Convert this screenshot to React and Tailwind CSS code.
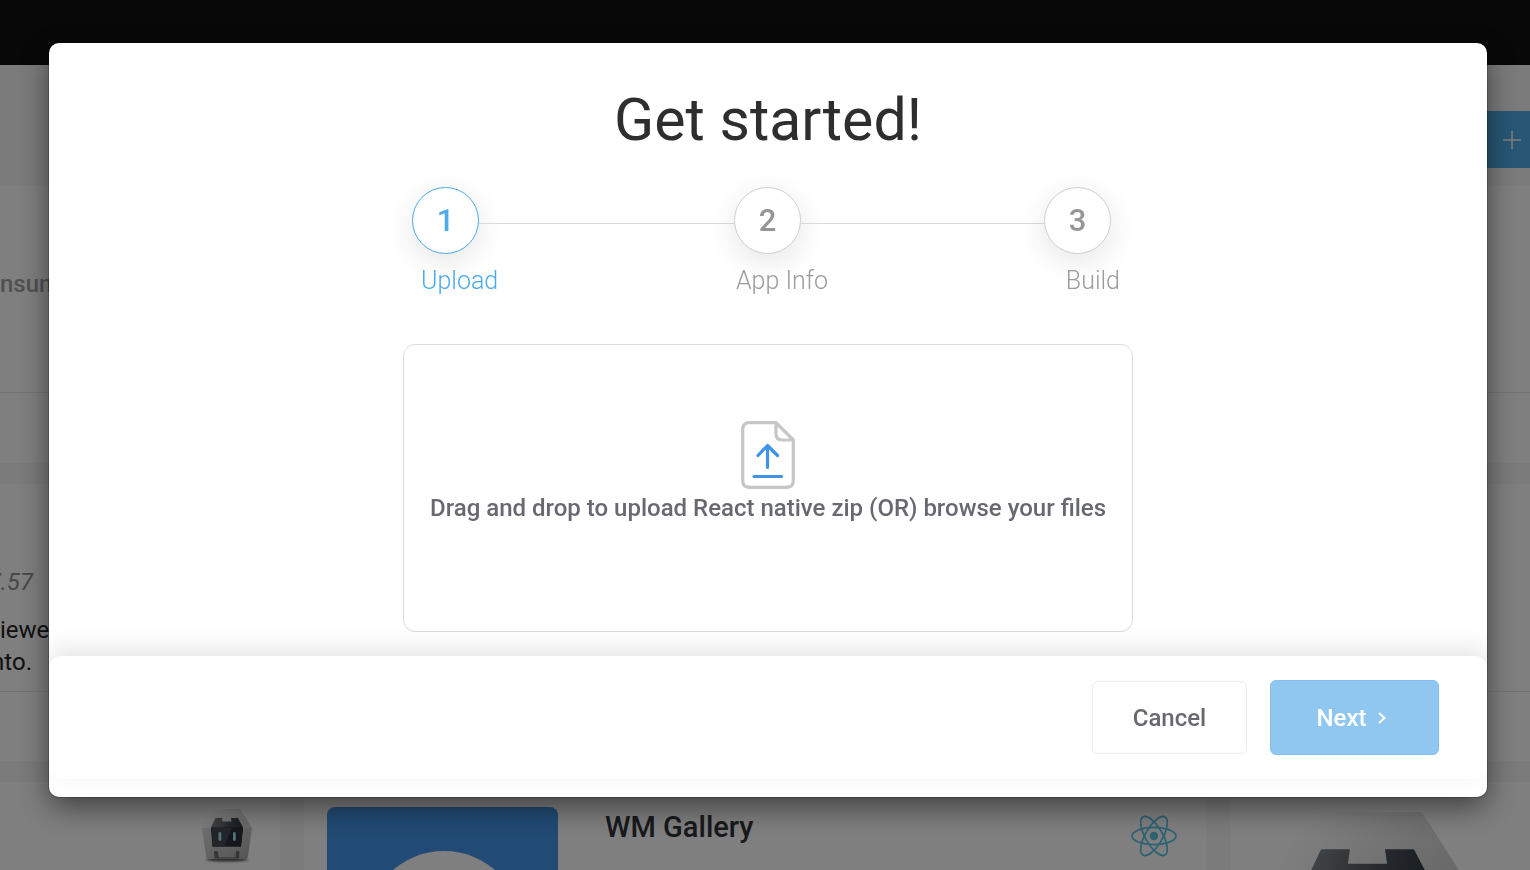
import React from "react";

const steps = ["Upload", "App Info", "Build"];

function CordovaIcon({ className, id }) {
  return (
    <svg viewBox="0 0 52 56" className={className} aria-hidden="true">
      <defs>
        <linearGradient id={id + "-top"} x1="0" y1="0" x2="1" y2="0.3">
          <stop offset="0.200" stopColor="#ffffff" />
          <stop offset="1" stopColor="#d4d4d4" />
        </linearGradient>
        <linearGradient id={id + "-body"} x1="0" y1="0" x2="1" y2="1">
          <stop offset="0" stopColor="#e0e0e0" />
          <stop offset="1" stopColor="#a8a8a8" />
        </linearGradient>
        <linearGradient id={id + "-face"} x1="0" y1="0" x2="1" y2="0.3">
          <stop offset="0" stopColor="#8a9197" />
          <stop offset="0.6" stopColor="#4b535a" />
          <stop offset="1" stopColor="#2b3542" />
        </linearGradient>
        <filter id={id + "-blur"} x="-20%" y="-100%" width="140%" height="300%">
          <feGaussianBlur stdDeviation="1.2" />
        </filter>
      </defs>
      <ellipse cx="26" cy="51.5" rx="21" ry="2" fill="#555" filter={`url(#${id}-blur)`} />
      <path d="M12 1H39L51 20H1Z" fill={`url(#${id}-top)`} />
      <path d="M1 20H51L47 48Q46.500 51 44 51H8Q5.500 51 5 48Z" fill={`url(#${id}-body)`} />
      <path d="M14.500 10H21.500L21 13.500H30.500L30 10H37L42 19.500L40 38.500H11.500L10 19.500Z" fill={`url(#${id}-face)`} />
      <path d="M10 19.500H42L40 38.500H11.500Z" fill="#29313c" />
      <path d="M10.500 20H31L23 38.500H12Z" fill="#454d55" />
      <rect x="17.500" y="24" width="2.800" height="9" rx="1.400" fill="#a6e4ef" />
      <rect x="32" y="24" width="2.800" height="9" rx="1.400" fill="#a6e4ef" />
      <path d="M13 43H16.500L18 49.500H34.500L35 43H38.500L38 50.500H13.500Z" fill="#6a6a6a" />
    </svg>
  );
}

function ReactIcon({ className }) {
  return (
    <svg viewBox="0 0 46 44" className={className} fill="none" stroke="#58c4e6" strokeWidth="1.700" aria-hidden="true">
      <circle cx="23" cy="22" r="4.200" fill="#58c4e6" stroke="none" />
      <ellipse cx="23" cy="22" rx="22" ry="8.600" />
      <ellipse cx="23" cy="22" rx="22" ry="8.600" transform="rotate(60 23 22)" />
      <ellipse cx="23" cy="22" rx="22" ry="8.600" transform="rotate(120 23 22)" />
    </svg>
  );
}

function FileUploadIcon() {
  return (
    <svg viewBox="0 0 54 68" className="h-[68px] w-[54px]" fill="none" strokeLinecap="round" strokeLinejoin="round" aria-hidden="true">
      <path d="M35 1.700H8.500Q1.700 1.700 1.700 8.500V59.500Q1.700 66.300 8.500 66.300H45.500Q52.300 66.300 52.300 59.500V19L35 1.700V13Q35 19 41 19H52" stroke="#c6c6c6" strokeWidth="3.200" />
      <path d="M26.500 46.500V25M17 34.500L26.500 24.500L36.500 34.500M13 55.500H40.500" stroke="#3f94e9" strokeWidth="3.200" />
    </svg>
  );
}

function Dashboard() {
  return (
    <div className="flex h-screen flex-col overflow-hidden bg-[#f7f7f7]" aria-hidden="true">
      <header className="h-[65px] shrink-0 bg-[#101010]" />
      <div className="flex h-[121px] shrink-0 items-start justify-end pt-[46px]">
        <button type="button" tabIndex={-1} aria-label="Add" className="flex h-[57px] w-[60px] items-center justify-end bg-[#50aeea] pr-2">
          <svg viewBox="0 0 20 20" className="size-5" stroke="#fff" strokeWidth="1.500">
            <path d="M10 1V19M1 10H19" />
          </svg>
        </button>
      </div>
      <main className="flex flex-col gap-[21px]">
        <section className="h-[277px] bg-white">
          <div className="h-[207px] border-b border-[#e6e6e6] pt-[82px]">
            <p className="text-[24px] leading-8 font-medium text-[#a2a2a2]">nsum</p>
          </div>
        </section>
        <section className="h-[277px] bg-white">
          <div className="h-[208px] border-b border-[#e6e6e6] pt-[82px] text-[24px] leading-8">
            <p className="flex w-[33px] justify-end text-[#909090] italic">7.57</p>
            <p className="pt-4 text-[#222]">iewer</p>
            <p className="flex w-8 justify-end text-[#222]">nto.</p>
          </div>
        </section>
        <section className="grid grid-cols-[280px_902px_1fr] gap-x-6">
          <div className="flex h-[277px] justify-end bg-white pt-[26px] pr-[27px]">
            <CordovaIcon id="small" className="h-[56px] w-[52px]" />
          </div>
          <div className="flex h-[277px] items-start bg-white px-[23px] pt-[25px]">
            <div className="h-[231px] w-[231px] overflow-hidden rounded-lg bg-[#4396e8] pt-11">
              <svg viewBox="0 0 231 187" aria-hidden="true">
                <circle cx="117" cy="78" r="78" fill="#fff" />
              </svg>
            </div>
            <h2 className="ml-[47px] grow pt-1 text-[29px] leading-8 font-medium text-[#303238]">WM Gallery</h2>
            <ReactIcon className="mt-[7px] mr-[6px] h-[44px] w-[46px]" />
          </div>
          <div className="flex h-[277px] bg-white pt-[26px] pl-[31px]">
            <CordovaIcon id="large" className="h-[231px] w-[215px] shrink-0" />
          </div>
        </section>
      </main>
    </div>
  );
}

function Stepper() {
  const circle = "flex size-[67px] shrink-0 items-center justify-center rounded-full border bg-white text-[31px] leading-none font-medium shadow-[0_8px_30px_rgba(0,0,0,0.1)]";
  return (
    <div className="mx-auto w-full max-w-[730px] pt-9 font-normal">
      <div className="flex items-center pr-[22px] pl-[9px]">
        <span className={circle + " border-[#4cabea] text-[#4cabea]"}>1</span>
        <span className="mt-[5px] h-px grow-[255] bg-[#d9dadc]" />
        <span className={circle + " border-[#cfcfcf] text-[#969696]"}>2</span>
        <span className="mt-[5px] h-px grow-[243] bg-[#d9dadc]" />
        <span className={circle + " border-[#cfcfcf] text-[#969696]"}>3</span>
      </div>
      <ol className="flex justify-between pt-[11px] pr-[13px] pl-[18px] text-[25px] leading-8 font-light">
        {steps.map((step, i) => (
          <li key={step} className={i === 0 ? "text-[#4cabea]" : "text-[#9c9c9c]"}>{step}</li>
        ))}
      </ol>
    </div>
  );
}

export default function App() {
  return (
    <div className="font-['Roboto',sans-serif]">
      <Dashboard />
      <div className="fixed inset-0 flex items-start bg-black/50 pt-[43px] pr-[43px] pl-[49px]">
        <div role="dialog" aria-modal="true" aria-labelledby="dialog-title" className="w-full overflow-hidden rounded-[10px] bg-white shadow-[0_0_0_1px_rgba(0,0,0,0.2),0_10px_30px_rgba(0,0,0,0.5)]">
          <div className="px-6 pt-[46px] pb-6">
            <h1 id="dialog-title" className="text-center text-[59px] leading-[62px] text-[#2e2e2e]">Get started!</h1>
            <Stepper />
            <label className="mx-auto mt-[47px] flex h-[288px] max-w-[730px] cursor-pointer flex-col items-center rounded-xl border border-[#dcdcdc] pt-[76px]">
              <FileUploadIcon />
              <span className="pt-[3px] text-[24px] leading-8 font-medium text-[#686970]">Drag and drop to upload React native zip (OR) browse your files</span>
              <input type="file" accept=".zip" className="sr-only" />
            </label>
          </div>
          <div className="pb-[18px]">
            <footer className="flex h-[123px] items-start justify-end gap-[23px] rounded-xl bg-white px-12 pt-6 shadow-[0_-8px_24px_rgba(0,0,0,0.1)]">
              <button type="button" className="mt-px h-[73px] w-[155px] rounded-md border border-[#ececee] text-[24px] font-medium text-[#686970]">Cancel</button>
              <button type="button" className="flex h-[75px] w-[169px] items-center justify-center gap-3 rounded-md border border-[#85c0ee] bg-[#90c7f1] pt-px pr-[6px] text-[24px] font-medium text-white">
                Next
                <svg viewBox="0 0 8 12" className="h-3 w-2" fill="none" stroke="currentColor" strokeWidth="2" aria-hidden="true">
                  <path d="M1 1L6.500 6L1 11" />
                </svg>
              </button>
            </footer>
          </div>
        </div>
      </div>
    </div>
  );
}
